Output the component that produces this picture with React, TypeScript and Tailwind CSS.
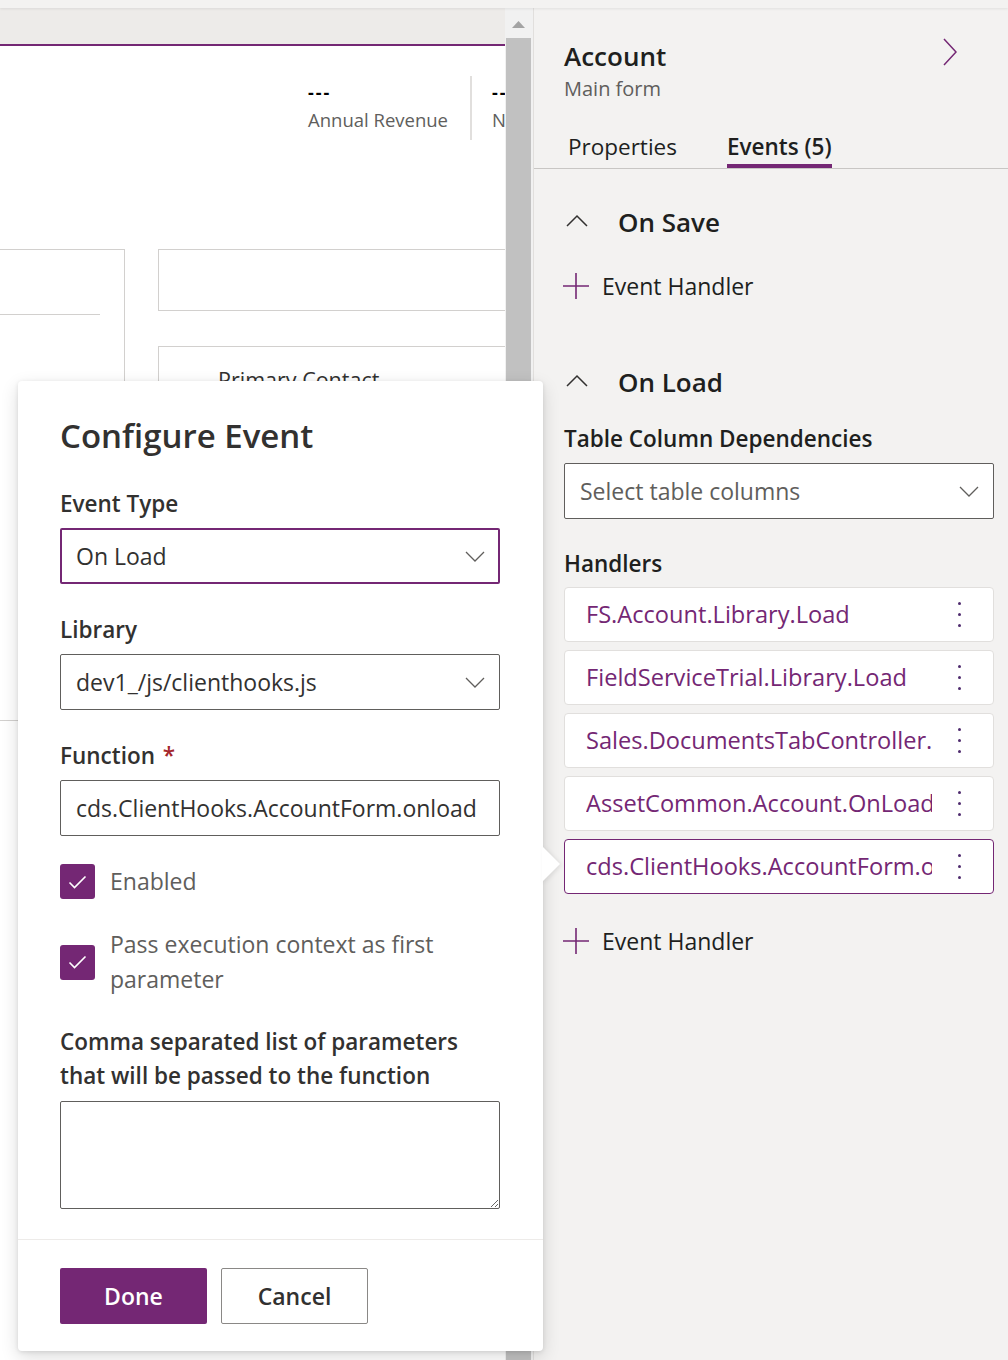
import React from "react";

const handlers = [
  "FS.Account.Library.Load",
  "FieldServiceTrial.Library.Load",
  "Sales.DocumentsTabController.setDocumentsTab",
  "AssetCommon.Account.OnLoad",
  "cds.ClientHooks.AccountForm.onload",
];

export default function App() {
  return (
    <div className="relative h-[1360px] w-[1008px] overflow-hidden bg-[#f3f2f1] font-['Open_Sans',sans-serif] text-[#323130]">
      <div className="relative z-10 h-[8px] bg-[#f3f2f1] shadow-[0_1px_3px_rgba(0,0,0,0.08)]" />
      <div className="flex h-[1352px]">
        <FormCanvas />
        <Scrollbar />
        <EventsPanel />
      </div>
      <ConfigureEvent />
    </div>
  );
}

function FormCanvas() {
  return (
    <div className="flex w-[505px] flex-col overflow-hidden bg-white">
      <div className="h-[38px] shrink-0 border-b-2 border-[#742774] bg-[#edebe9]" />
      <div className="mt-[30px] flex h-[64px] pl-[308px]">
        <div className="w-[162px] shrink-0 pt-[2px]">
          <div className="text-[18px] leading-[28px] font-bold tracking-[2px] text-black">---</div>
          <div className="text-[18.5px] leading-[28px] text-[#605e5c]">Annual Revenue</div>
        </div>
        <div className="w-[2px] shrink-0 bg-[#e1dfdd]" />
        <div className="shrink-0 pl-[20px] pt-[2px]">
          <div className="text-[18px] leading-[28px] font-bold tracking-[2px] text-black">---</div>
          <div className="text-[18.5px] leading-[28px] text-[#605e5c]">Number of Employees</div>
        </div>
      </div>
      <div className="mt-[109px] flex">
        <div className="h-[472px] w-[125px] shrink-0 border-y border-r border-[#d2d0ce]">
          <div className="mt-[64px] h-px w-[100px] bg-[#d2d0ce]" />
        </div>
        <div className="ml-[33px] flex flex-1 flex-col">
          <div className="h-[62px] border-y border-l border-[#d2d0ce]" />
          <div className="mt-[35px] h-[300px] border-t border-l border-[#d2d0ce] pl-[59px] pt-[18px]">
            <div className="text-[21.5px] leading-[30px] text-[#323130]">Primary Contact</div>
          </div>
        </div>
      </div>
    </div>
  );
}

function Scrollbar() {
  return (
    <div className="flex w-[28px] shrink-0 flex-col bg-[#f1f1f1]">
      <div className="flex h-[30px] shrink-0 justify-center pt-[13px] pr-[1px]">
        <svg width="13" height="7" viewBox="0 0 13 7">
          <path d="M0 7L6.5 0L13 7Z" fill="#a3a3a3" />
        </svg>
      </div>
      <div className="ml-[1px] w-[25px] flex-1 bg-[#c1c1c1]" />
    </div>
  );
}

function EventsPanel() {
  return (
    <aside className="flex w-[475px] shrink-0 flex-col border-l border-[#e1dfdd] bg-[#f3f2f1]">
      <div className="flex justify-between pt-[30px] pl-[30px] pr-[51px]">
        <div>
          <div className="text-[26px] leading-[36px] font-semibold text-[#201f1e]">Account</div>
          <div className="text-[20px] leading-[30px] text-[#605e5c]">Main form</div>
        </div>
        <svg width="14" height="28" viewBox="0 0 14 28" fill="none">
          <path d="M1 1L13 14L1 27" stroke="#742774" strokeWidth="1.5" />
        </svg>
      </div>

      <div className="mt-[27px] flex border-b border-[#c8c6c4] pl-[30px]">
        <Tab label="Properties" className="px-[4px]" />
        <Tab label="Events (5)" active className="ml-[43px] px-[3px]" />
      </div>

      <div className="flex flex-col pl-[30px] pr-[14px]">
        <SectionHeader label="On Save" className="mt-[35px]" />
        <AddHandler className="mt-[30px]" />

        <SectionHeader label="On Load" className="mt-[62px]" />
        <div className="mt-[23px] text-[22.5px] leading-[32px] font-semibold text-[#201f1e]">
          Table Column Dependencies
        </div>
        <div className="mt-[8px] flex h-[56px] items-center justify-between rounded-[2px] border border-[#605e5c] bg-white pl-[15px] pr-[14px]">
          <span className="text-[23px] text-[#605e5c]">Select table columns</span>
          <ChevronDown />
        </div>

        <div className="mt-[29px] text-[22.5px] leading-[32px] font-semibold text-[#201f1e]">Handlers</div>
        <div className="mt-[7px] flex flex-col gap-[8px]">
          {handlers.map((name, i) => (
            <HandlerCard key={name} name={name} selected={i === handlers.length - 1} />
          ))}
        </div>
        <AddHandler className="mt-[31px]" />
      </div>
    </aside>
  );
}

function Tab({ label, active, className }: { label: string; active?: boolean; className?: string }) {
  return (
    <div className={`flex flex-col ${className ?? ""}`}>
      <span className={`h-[33px] text-[22.5px] leading-[32px] text-[#201f1e] ${active ? "font-semibold" : ""}`}>{label}</span>
      <span className={`h-[4px] ${active ? "bg-[#742774]" : ""}`} />
    </div>
  );
}

function SectionHeader({ label, className }: { label: string; className?: string }) {
  return (
    <div className={`flex h-[36px] items-center ${className ?? ""}`}>
      <svg width="22" height="13" viewBox="0 0 22 13" fill="none" className="ml-[2px] -mt-[3px]">
        <path d="M1 12L11 2L21 12" stroke="#323130" strokeWidth="1.5" />
      </svg>
      <span className="ml-[30px] text-[26px] font-semibold text-[#201f1e]">{label}</span>
    </div>
  );
}

function AddHandler({ className }: { className?: string }) {
  return (
    <div className={`flex h-[32px] items-center ${className ?? ""}`}>
      <svg width="26" height="26" viewBox="0 0 26 26" className="-ml-[1px]">
        <path d="M13 0V26M0 13H26" stroke="#742774" strokeWidth="1.6" />
      </svg>
      <span className="ml-[13px] text-[23px] text-[#201f1e]">Event Handler</span>
    </div>
  );
}

function HandlerCard({ name, selected }: { name: string; selected?: boolean }) {
  return (
    <div
      className={`flex h-[55px] items-center rounded-[4px] border bg-white pl-[21px] ${
        selected ? "border-[#742774]" : "border-[#e1dfdd]"
      }`}
    >
      <div className="w-[346px] overflow-hidden whitespace-nowrap text-[23.6px] text-[#742774]">{name}</div>
      <div className="ml-[26px] flex flex-col gap-[8px]">
        <span className="h-[3px] w-[3px] rounded-full bg-[#4f2b6e]" />
        <span className="h-[3px] w-[3px] rounded-full bg-[#4f2b6e]" />
        <span className="h-[3px] w-[3px] rounded-full bg-[#4f2b6e]" />
      </div>
    </div>
  );
}

function ChevronDown() {
  return (
    <svg width="20" height="11" viewBox="0 0 20 11" fill="none">
      <path d="M1 1L10 10L19 1" stroke="#605e5c" strokeWidth="1.3" />
    </svg>
  );
}

function CheckBox() {
  return (
    <div className="flex h-[35px] w-[35px] shrink-0 items-center justify-center rounded-[3px] bg-[#742774]">
      <svg width="19" height="14" viewBox="0 0 19 14" fill="none">
        <path d="M1.5 7.5L6.5 12.5L17.5 1.5" stroke="white" strokeWidth="1.6" />
      </svg>
    </div>
  );
}

function ConfigureEvent() {
  return (
    <div className="absolute left-[18px] top-[381px] z-20 flex h-[970px] w-[525px] flex-col rounded-[4px] bg-white shadow-[0_6px_18px_rgba(0,0,0,0.14),0_1px_4px_rgba(0,0,0,0.1)]">
      <svg
        width="19"
        height="36"
        viewBox="0 0 19 36"
        className="absolute left-[524px] top-[465px] drop-shadow-[2px_1px_2px_rgba(0,0,0,0.08)]"
      >
        <path d="M0 0L18 18L0 36Z" fill="white" />
      </svg>

      <div className="flex flex-col pl-[42px] pr-[43px] pt-[35px]">
        <h2 className="text-[33px] leading-[40px] font-semibold text-[#323130]">Configure Event</h2>

        <Label className="mt-[33px]">Event Type</Label>
        <div className="mt-[9px] flex h-[56px] items-center justify-between rounded-[2px] border-2 border-[#742774] pl-[14px] pr-[13px]">
          <span className="text-[23px] text-[#323130]">On Load</span>
          <ChevronDown />
        </div>

        <Label className="mt-[31px]">Library</Label>
        <div className="mt-[9px] flex h-[56px] items-center justify-between rounded-[2px] border border-[#605e5c] pl-[15px] pr-[14px]">
          <span className="text-[23px] text-[#323130]">dev1_/js/clienthooks.js</span>
          <ChevronDown />
        </div>

        <Label className="mt-[31px]">
          Function <span className="ml-[2px] text-[#a4262c]">*</span>
        </Label>
        <div className="mt-[9px] flex h-[56px] items-center overflow-hidden rounded-[2px] border border-[#605e5c] pl-[15px]">
          <span className="whitespace-nowrap text-[23px] text-[#323130]">cds.ClientHooks.AccountForm.onload</span>
        </div>

        <div className="mt-[28px] flex items-center">
          <CheckBox />
          <span className="ml-[15px] text-[23px] text-[#605e5c]">Enabled</span>
        </div>

        <div className="mt-[28px] flex items-center">
          <CheckBox />
          <span className="ml-[15px] text-[23px] leading-[35px] text-[#605e5c]">
            Pass execution context as first
            <br />
            parameter
          </span>
        </div>

        <div className="mt-[28px] text-[22.5px] leading-[34px] font-semibold text-[#323130]">
          Comma separated list of parameters
          <br />
          that will be passed to the function
        </div>
        <textarea className="mt-[8px] h-[108px] rounded-[2px] border border-[#605e5c] outline-none" />
      </div>

      <div className="mt-[30px] border-t border-[#edebe9]" />
      <div className="mt-[28px] flex gap-[14px] pl-[42px]">
        <button className="h-[56px] w-[147px] rounded-[2px] bg-[#742774] text-[23px] font-semibold text-white">Done</button>
        <button className="h-[56px] w-[147px] rounded-[2px] border border-[#8a8886] bg-white text-[23px] font-semibold text-[#323130]">
          Cancel
        </button>
      </div>
    </div>
  );
}

function Label({ children, className }: { children: React.ReactNode; className?: string }) {
  return <div className={`text-[22.5px] leading-[30px] font-semibold text-[#323130] ${className ?? ""}`}>{children}</div>;
}
